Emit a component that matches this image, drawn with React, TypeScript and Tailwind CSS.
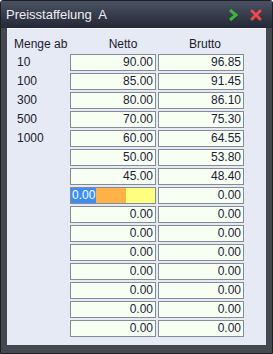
import React from "react";

const rows: { qty?: string; netto: string; brutto: string }[] = [
  { qty: "10", netto: "90.00", brutto: "96.85" },
  { qty: "100", netto: "85.00", brutto: "91.45" },
  { qty: "300", netto: "80.00", brutto: "86.10" },
  { qty: "500", netto: "70.00", brutto: "75.30" },
  { qty: "1000", netto: "60.00", brutto: "64.55" },
  { netto: "50.00", brutto: "53.80" },
  { netto: "45.00", brutto: "48.40" },
  { netto: "", brutto: "0.00" },
  { netto: "0.00", brutto: "0.00" },
  { netto: "0.00", brutto: "0.00" },
  { netto: "0.00", brutto: "0.00" },
  { netto: "0.00", brutto: "0.00" },
  { netto: "0.00", brutto: "0.00" },
  { netto: "0.00", brutto: "0.00" },
  { netto: "0.00", brutto: "0.00" },
];

const Cell: React.FC<{ value: string }> = ({ value }) => (
  <div className="w-[86px] h-[17px] border border-[#858b96] bg-[#f7fff3] text-right pr-[2px] text-[12px] leading-[15px] text-[#1c1c3c]">
    {value}
  </div>
);

const SelectedCell: React.FC = () => (
  <div className="w-[86px] h-[17px] border border-[#858b96] flex">
    <div className="w-[25px] h-full bg-[#3d8ef0] text-white text-[12px] leading-[15px] pl-[1px] whitespace-nowrap">0.00</div>
    <div className="w-[30px] h-full bg-[#ffb347]" />
    <div className="flex-1 h-full bg-[#ffff80]" />
  </div>
);

export default function App() {
  return (
    <div
      className="w-[273px] h-[354px] bg-[#45484f] rounded-t-[3px] flex flex-col border border-[#1d1f24]"
      style={{ fontFamily: "'Liberation Sans', Arial, sans-serif" }}
    >
      <div className="h-[27px] flex items-center justify-between pl-[5px] pr-[10px] bg-gradient-to-b from-[#4b5263] to-[#242937]">
        <span className="text-[13px] text-[#eceef4] whitespace-pre">Preisstaffelung  A</span>
        <div className="flex items-center gap-[12px]">
          <svg width="10" height="12" viewBox="0 0 10 12">
            <path d="M2 1 L8 6 L2 11" fill="none" stroke="#3fb43a" strokeWidth="3" />
          </svg>
          <svg width="12" height="12" viewBox="0 0 12 12">
            <path d="M2 2 L10 10 M10 2 L2 10" stroke="#f04848" strokeWidth="3" strokeLinecap="round" />
          </svg>
        </div>
      </div>
      <div className="mx-[6px] h-[317px] bg-[#e6eaf5] border-t border-[#f4f6fb]">
        <div className="flex h-[25px] pt-[8px] text-[12px] leading-[14px] text-[#1a1a2a] whitespace-nowrap">
          <div className="w-[63px] pl-[7px]">Menge ab</div>
          <div className="w-[88px] pl-[18px] text-center">Netto</div>
          <div className="w-[86px] pl-[8px] text-center">Brutto</div>
        </div>
        <div className="flex flex-col gap-[2px]">
          {rows.map((r, i) => (
            <div key={i} className="flex items-center">
              <div className="w-[63px] pl-[10px] text-[12px] leading-[15px] text-[#1a1a2a]">{r.qty}</div>
              {i === 7 ? <SelectedCell /> : <Cell value={r.netto} />}
              <div className="w-[2px]" />
              <Cell value={r.brutto} />
            </div>
          ))}
        </div>
      </div>
    </div>
  );
}
